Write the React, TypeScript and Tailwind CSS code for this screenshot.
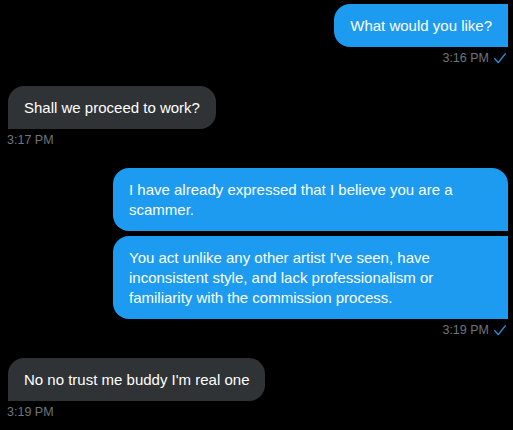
import React from "react";

function Check() {
  return (
    <svg width="12" height="11" viewBox="0 0 12 11" fill="none" className="block">
      <path d="M0.8 5.6 L4.2 9.6 L11.2 0.8" stroke="#1d9bf0" strokeWidth="1.3" strokeLinecap="round" strokeLinejoin="round" />
    </svg>
  );
}

function SentTime({ t }: { t: string }) {
  return (
    <div className="mt-[3px] mr-[2px] flex items-center gap-[5px] text-[12.5px] leading-4 text-[#6e767d]">
      <span>{t}</span>
      <Check />
    </div>
  );
}

function RecvTime({ t }: { t: string }) {
  return <div className="mt-[3px] -ml-px text-[12.5px] leading-4 text-[#6e767d]">{t}</div>;
}

export default function App() {
  return (
    <div className="h-[430px] w-full overflow-hidden bg-black pl-2 pr-[5px] pt-1 text-[15px] leading-5 text-white font-['Liberation_Sans',Arial,sans-serif]">
      <div className="mb-5 flex flex-col items-end">
        <div className="rounded-l-[16px] bg-[#1d9bf0] px-4 py-[11.5px]">What would you like?</div>
        <SentTime t="3:16 PM" />
      </div>

      <div className="mb-5 flex flex-col items-start">
        <div className="rounded-tl-[16px] rounded-r-[16px] bg-[#2f3336] px-4 py-[11.5px]">Shall we proceed to work?</div>
        <RecvTime t="3:17 PM" />
      </div>

      <div className="mb-5 flex flex-col items-end gap-[5px]">
        <div className="w-[395px] rounded-l-[16px] rounded-tr-[16px] bg-[#1d9bf0] px-4 py-[11.5px]">
          I have already expressed that I believe you are a scammer.
        </div>
        <div className="w-[395px] rounded-l-[16px] bg-[#1d9bf0] px-4 py-[11.5px]">
          You act unlike any other artist I've seen, have inconsistent style, and lack professionalism or familiarity with the commission process.
        </div>
        <div className="-mt-[5px]">
          <SentTime t="3:19 PM" />
        </div>
      </div>

      <div className="flex flex-col items-start">
        <div className="rounded-tl-[16px] rounded-r-[16px] bg-[#2f3336] px-4 py-[11.5px]">No no trust me buddy I'm real one</div>
        <RecvTime t="3:19 PM" />
      </div>
    </div>
  );
}
